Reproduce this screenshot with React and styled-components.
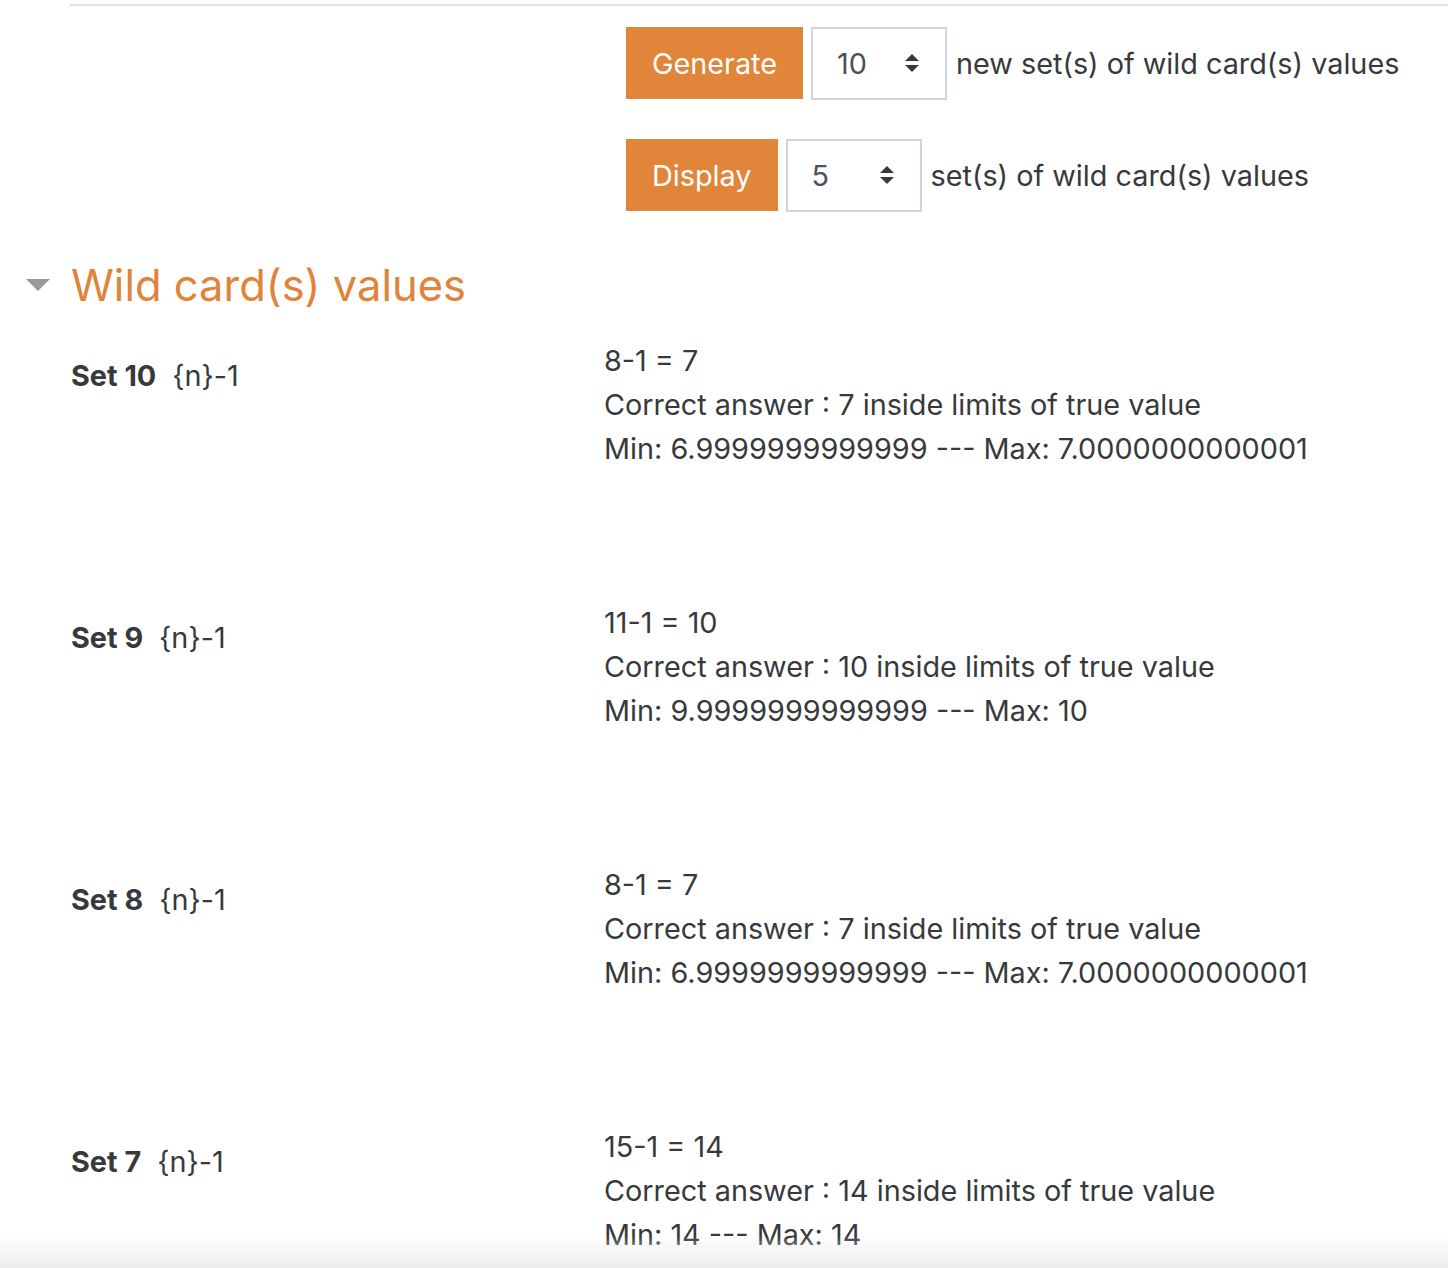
import React from 'react';
import styled, {createGlobalStyle} from 'styled-components';

const GlobalStyle = createGlobalStyle`
  html, body {
    margin: 0;
    padding: 0;
    background: #fff;
  }
  body {
    font-family: Inter, "Noto Sans", sans-serif;
    color: #373a3c;
  }
`;

const sets = [
  {id: 10, formula: '8-1 = 7', answer: '7', min: '6.9999999999999', max: '7.0000000000001'},
  {id: 9, formula: '11-1 = 10', answer: '10', min: '9.9999999999999', max: '10'},
  {id: 8, formula: '8-1 = 7', answer: '7', min: '6.9999999999999', max: '7.0000000000001'},
  {id: 7, formula: '15-1 = 14', answer: '14', min: '14', max: '14'},
];

const SpinArrows = () => (
  <svg width="16" height="22" viewBox="0 0 16 22">
    <path d="M8 2 L15 9 L1 9 Z" fill="#373a3c" />
    <path d="M1 13 L15 13 L8 20 Z" fill="#373a3c" />
  </svg>
);

const Caret = () => (
  <svg width="26" height="14" viewBox="0 0 26 14">
    <path d="M1 1 L25 1 L13 13 Z" fill="#999" />
  </svg>
);

const App = () => (
  <Page>
    <GlobalStyle />
    <TopRule />
    <Controls>
      <ControlRow>
        <OrangeButton>Generate</OrangeButton>
        <Select>
          <span>10</span>
          <SpinArrows />
        </Select>
        <ControlText>new set(s) of wild card(s) values</ControlText>
      </ControlRow>
      <ControlRow>
        <OrangeButton>Display</OrangeButton>
        <Select>
          <span>5</span>
          <SpinArrows />
        </Select>
        <ControlText>set(s) of wild card(s) values</ControlText>
      </ControlRow>
    </Controls>

    <Section>
      <SectionHeader>
        <CaretBox><Caret /></CaretBox>
        <Heading>Wild card(s) values</Heading>
      </SectionHeader>
      {sets.map((s) => (
        <SetRow key={s.id}>
          <SetLabel>
            <b>Set {s.id}</b>
            <span>{'{n}-1'}</span>
          </SetLabel>
          <SetBody>
            <div>{s.formula}</div>
            <div>Correct answer : {s.answer} inside limits of true value</div>
            <div>Min: {s.min} --- Max: {s.max}</div>
          </SetBody>
        </SetRow>
      ))}
    </Section>
    <BottomShade />
  </Page>
);

const Page = styled.div`
  padding-top: 4px;
  min-height: 1268px;
  box-sizing: border-box;
`;

const TopRule = styled.div`
  margin-left: 70px;
  height: 2px;
  background: #dee2e6;
`;

const Controls = styled.div`
  margin-left: 626px;
  margin-top: 21px;
  display: flex;
  flex-direction: column;
  gap: 40px;
`;

const ControlRow = styled.div`
  display: flex;
  align-items: center;
  height: 72px;
`;

const OrangeButton = styled.button`
  height: 72px;
  padding: 0 26px;
  border: none;
  border-radius: 0;
  background: #e0853a;
  color: #fff;
  font-family: Inter, "Noto Sans", sans-serif;
  font-size: 28.8px;
  cursor: pointer;
`;

const Select = styled.div`
  width: 136px;
  height: 73px;
  margin-left: 8px;
  box-sizing: border-box;
  border: 2px solid #ced4da;
  display: flex;
  align-items: center;
  justify-content: space-between;
  padding: 0 25px 0 24px;
  font-size: 28.8px;
  color: #495057;
`;

const ControlText = styled.span`
  margin-left: 9px;
  font-size: 28.8px;
`;

const Section = styled.div`
  margin-top: 46px;
`;

const SectionHeader = styled.div`
  display: flex;
  align-items: center;
  height: 56px;
`;

const CaretBox = styled.div`
  width: 71px;
  padding-left: 25px;
  box-sizing: border-box;
  display: flex;
  align-items: center;
`;

const Heading = styled.h3`
  margin: 0;
  font-size: 43.5px;
  line-height: 56px;
  font-weight: 400;
  color: #e0843a;
`;

const SetRow = styled.div`
  display: flex;
  margin-top: 26px;
  margin-bottom: 130px;
  padding-left: 71px;
`;

const SetLabel = styled.div`
  width: 533px;
  padding-top: 15px;
  font-size: 28.8px;
  line-height: 44px;
  display: flex;
  gap: 16px;

  b {
    font-weight: 700;
  }
`;

const SetBody = styled.div`
  font-size: 28.8px;
  line-height: 44px;
`;

const BottomShade = styled.div`
  position: fixed;
  left: 0;
  right: 0;
  bottom: 0;
  height: 32px;
  background: linear-gradient(to bottom, rgba(240, 240, 240, 0), rgba(236, 236, 236, 1));
  pointer-events: none;
`;

export default App;
